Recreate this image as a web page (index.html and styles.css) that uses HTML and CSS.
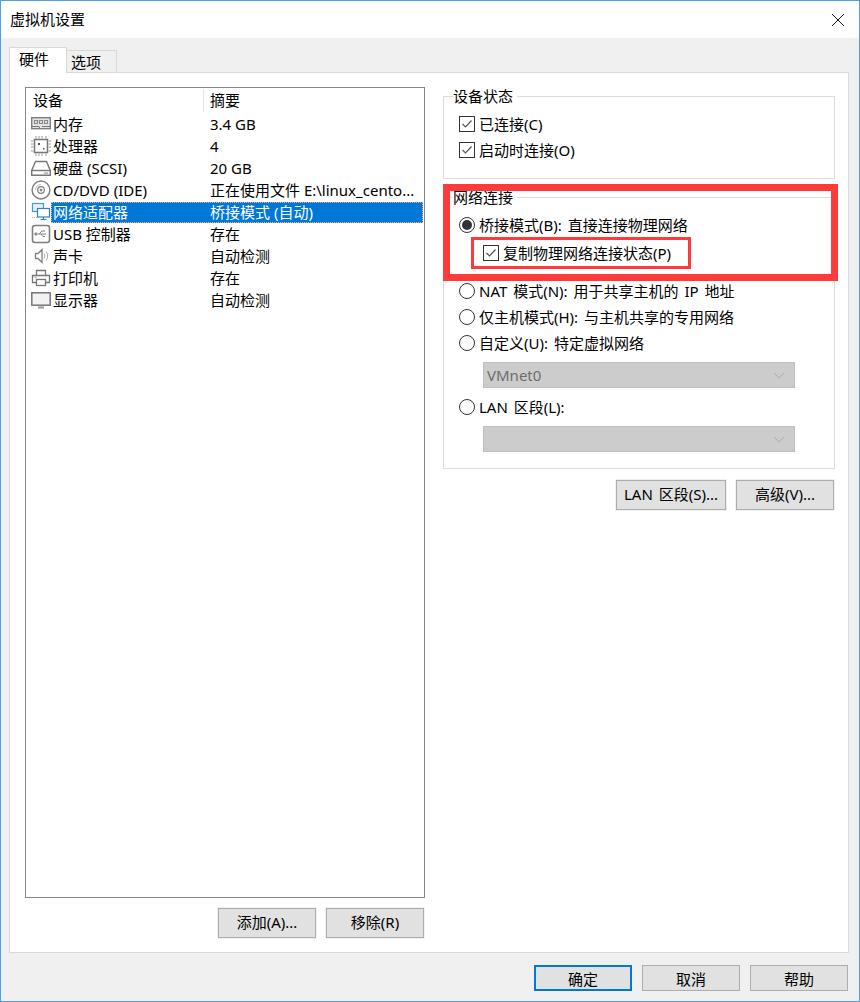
FILE: index.html
```html
<!DOCTYPE html>
<html lang="zh-CN">

<head>
    <meta charset="UTF-8">
    <title>虚拟机设置</title>
    <link rel="stylesheet" href="styles.css">
</head>

<body>
    <div class="window">
        <div class="titlebar">
            <span class="title">虚拟机设置</span>
            <svg class="close" width="12" height="12" viewBox="0 0 12 12"><path d="M0 0L12 12M12 0L0 12" stroke="#111" stroke-width="1" fill="none"/></svg>
        </div>
        <div class="body">
            <div class="tabs">
                <div class="tab active">硬件</div>
                <div class="tab">选项</div>
            </div>
            <div class="panel">
                <div class="left">
                    <div class="list">
                        <div class="list-head">
                            <div class="head-name">设备</div>
                            <div class="head-sum">摘要</div>
                        </div>
                        <div class="row">
                            <svg class="icon" viewBox="0 0 20 20" fill="none" stroke="#777" stroke-width="1.300"><rect x="0.700" y="3.700" width="18.600" height="11" fill="#e4e4e4"/><path d="M3.500 6.500h3v3h-3zM8.500 6.500h3v3h-3zM13.500 6.500h3v3h-3z" stroke="#888" stroke-width="1.100"/><path d="M1 12.500h7l1 2M19 12.500h-8" stroke-width="1"/></svg>
                            <div class="cell"><span class="name">内存</span><span class="sum">3.4 GB</span></div>
                        </div>
                        <div class="row">
                            <svg class="icon" viewBox="0 0 20 20" fill="none" stroke="#777"><rect x="3.500" y="3.500" width="13" height="13" stroke-width="1.500"/><path d="M5 0v2.500M8 0v2.500M11 0v2.500M15 0v2.500M5 17.500v2.500M8 17.500v2.500M11 17.500v2.500M15 17.500v2.500M0 5h2.500M0 8h2.500M0 11h2.500M0 15h2.500M17.500 5h2.500M17.500 8h2.500M17.500 11h2.500M17.500 15h2.500" stroke="#999"/><path d="M7 7h2v2h-2zM12 12h1.500v1.500h-1.500z" fill="#555" stroke="none"/></svg>
                            <div class="cell"><span class="name">处理器</span><span class="sum">4</span></div>
                        </div>
                        <div class="row">
                            <svg class="icon" viewBox="0 0 20 20" fill="none" stroke="#777" stroke-width="1.400"><path d="M4.500 3.500h11l3.800 9v4.800h-18.600v-4.800z"/><path d="M1 12.500h18"/><path d="M13 15h4" stroke="#aaa"/></svg>
                            <div class="cell"><span class="name">硬盘 (SCSI)</span><span class="sum">20 GB</span></div>
                        </div>
                        <div class="row">
                            <svg class="icon" viewBox="0 0 20 20" fill="none" stroke="#808080"><circle cx="10" cy="10" r="8.900" stroke-width="1.500"/><circle cx="10" cy="10" r="3.300" stroke-width="1.200"/><circle cx="10" cy="10" r="1" fill="#888"/><path d="M4.500 10a5.500 5.500 0 0 1 5.500-5.500" stroke="#bbb"/></svg>
                            <div class="cell"><span class="name">CD/DVD (IDE)</span><span class="sum">正在使用文件 E:\linux_cento...</span></div>
                        </div>
                        <div class="row selected">
                            <svg class="icon" viewBox="0 0 20 20" fill="none" stroke="#4a9ad8" stroke-width="1.200"><rect x="1.500" y="1.500" width="11" height="8" fill="#e4f1fb"/><rect x="6.500" y="6.500" width="12" height="8.500" fill="#fff" stroke="#2d84c8"/><path d="M12.500 15v2M9.500 17.500h6" stroke="#2d84c8"/><path d="M1 15.500h5" stroke="#aaa" stroke-dasharray="1 1"/></svg>
                            <div class="cell"><span class="name">网络适配器</span><span class="sum">桥接模式 (自动)</span></div>
                        </div>
                        <div class="row">
                            <svg class="icon" viewBox="0 0 20 20" fill="none" stroke="#808080"><rect x="1.500" y="1.500" width="17" height="17" rx="2.500" stroke-width="1.600"/><path d="M5 10h10M8 10l3-3h3M10 10l2 2.500h2"/><path d="M5 8.500v3l-1.500-1.500z" fill="#808080"/></svg>
                            <div class="cell"><span class="name">USB 控制器</span><span class="sum">存在</span></div>
                        </div>
                        <div class="row">
                            <svg class="icon" viewBox="0 0 20 20" fill="none" stroke="#808080"><path d="M4.500 7.500h2.500l4-4v13l-4-4h-2.500z" stroke-width="1.300"/><path d="M13 7.500a4 4 0 0 1 0 5M15 5.500a7 7 0 0 1 0 9" stroke="#aaa"/></svg>
                            <div class="cell"><span class="name">声卡</span><span class="sum">自动检测</span></div>
                        </div>
                        <div class="row">
                            <svg class="icon" viewBox="0 0 20 20" fill="none" stroke="#777" stroke-width="1.300"><path d="M5.500 7.500v-5h9v5"/><path d="M5 14.500h-3.500v-7h17v7h-3.500"/><rect x="5.500" y="11.500" width="9" height="6"/><path d="M3.500 9.500h2" stroke="#aaa"/></svg>
                            <div class="cell"><span class="name">打印机</span><span class="sum">存在</span></div>
                        </div>
                        <div class="row">
                            <svg class="icon" viewBox="0 0 20 20" fill="none" stroke="#777" stroke-width="1.500"><rect x="0.800" y="2.800" width="18.400" height="12.400" fill="#f2f2f2"/><path d="M7 17.500h6" stroke-width="2" stroke="#999"/></svg>
                            <div class="cell"><span class="name">显示器</span><span class="sum">自动检测</span></div>
                        </div>
                    </div>
                    <div class="left-btns">
                        <button class="btn">添加(A)...</button>
                        <button class="btn">移除(R)</button>
                    </div>
                </div>
                <div class="right">
                    <fieldset class="group status">
                        <legend>设备状态</legend>
                        <div class="opt"><span class="check"><svg width="14" height="14" viewBox="0 0 14 14"><path d="M2.500 7l3 3 6-6.500" fill="none" stroke="#555" stroke-width="1.200"/></svg></span><span class="label">已连接(C)</span></div>
                        <div class="opt"><span class="check"><svg width="14" height="14" viewBox="0 0 14 14"><path d="M2.500 7l3 3 6-6.500" fill="none" stroke="#555" stroke-width="1.200"/></svg></span><span class="label">启动时连接(O)</span></div>
                    </fieldset>
                    <fieldset class="group network">
                        <legend>网络连接</legend>
                        <div class="opt"><span class="radio on"></span><span class="label">桥接模式(B): 直接连接物理网络</span></div>
                        <div class="opt sub"><span class="check"><svg width="14" height="14" viewBox="0 0 14 14"><path d="M2.500 7l3 3 6-6.500" fill="none" stroke="#555" stroke-width="1.200"/></svg></span><span class="label">复制物理网络连接状态(P)</span></div>
                        <div class="opt after-sub"><span class="radio"></span><span class="label">NAT 模式(N): 用于共享主机的 IP 地址</span></div>
                        <div class="opt"><span class="radio"></span><span class="label">仅主机模式(H): 与主机共享的专用网络</span></div>
                        <div class="opt"><span class="radio"></span><span class="label">自定义(U): 特定虚拟网络</span></div>
                        <div class="select"><span>VMnet0</span><svg width="12" height="7" viewBox="0 0 12 7"><path d="M1 1l5 5 5-5" fill="none" stroke="#a8a8a8"/></svg></div>
                        <div class="opt after-select"><span class="radio"></span><span class="label">LAN 区段(L):</span></div>
                        <div class="select"><span></span><svg width="12" height="7" viewBox="0 0 12 7"><path d="M1 1l5 5 5-5" fill="none" stroke="#a8a8a8"/></svg></div>
                    </fieldset>
                    <div class="right-btns">
                        <button class="btn wide">LAN 区段(S)...</button>
                        <button class="btn">高级(V)...</button>
                    </div>
                    <div class="mark mark-big"></div>
                    <div class="mark mark-small"></div>
                </div>
            </div>
            <div class="footer">
                <button class="btn short default">确定</button>
                <button class="btn short">取消</button>
                <button class="btn short">帮助</button>
            </div>
        </div>
    </div>
</body>

</html>
```
FILE: styles.css
```css
* {
    box-sizing: border-box;
}

body {
    margin: 0;
    font-family: "Noto Sans", "Noto Sans CJK SC", sans-serif;
    font-size: 15px;
    color: #000;
}

.window {
    display: flex;
    flex-direction: column;
    width: 860px;
    height: 1002px;
    border: 1px solid #4f9fe8;
    background-color: #f0f0f0;
}

.titlebar {
    display: flex;
    justify-content: space-between;
    align-items: center;
    height: 37px;
    padding: 0 15px 0 9px;
    background-color: #fff;
    flex-shrink: 0;
}

.title {
    padding-bottom: 2px;
}

.body {
    display: flex;
    flex-direction: column;
    flex: 1;
    padding: 9px 10px 10px 8px;
}

.tabs {
    display: flex;
    align-items: flex-end;
    height: 25px;
}

.tab {
    width: 50px;
    height: 22px;
    padding-left: 4px;
    line-height: 22px;
    background-color: #f0f0f0;
    border: 1px solid #d9d9d9;
    border-bottom: 0;
    border-left: 0;
}

.tab.active {
    position: relative;
    z-index: 1;
    width: 58px;
    height: 26px;
    margin-bottom: -1px;
    padding-left: 9px;
    line-height: 23px;
    background-color: #fff;
    border-left: 1px solid #d9d9d9;
}

.panel {
    display: flex;
    flex: 1;
    gap: 18px;
    padding: 14px 13px 14px 15px;
    background-color: #fff;
    border: 1px solid #d9d9d9;
}

.left {
    display: flex;
    flex-direction: column;
    width: 400px;
}

.list {
    flex: 1;
    padding: 1px;
    border: 1px solid #828790;
}

.list-head {
    display: flex;
    height: 24px;
    line-height: 23px;
}

.head-name {
    width: 177px;
    height: 23px;
    padding-left: 6px;
    border-right: 1px solid #e5e5e5;
}

.head-sum {
    padding-left: 6px;
}

.row {
    display: flex;
    align-items: center;
    height: 22px;
    padding-left: 4px;
}

.icon {
    width: 20px;
    height: 20px;
    flex-shrink: 0;
}

.cell {
    display: flex;
    flex: 1;
    height: 21px;
    line-height: 19px;
    padding-left: 1px;
    border: 1px solid transparent;
    white-space: nowrap;
}

.name {
    width: 157px;
}

.selected .cell {
    color: #fff;
    background-color: #0078d7;
    border: 1px dotted #ffb066;
}

.left-btns {
    display: flex;
    justify-content: flex-end;
    gap: 10px;
    margin-top: 10px;
    padding-right: 1px;
}

.btn {
    width: 98px;
    height: 30px;
    padding: 0 0 3px;
    font-family: inherit;
    font-size: 15px;
    word-spacing: 2px;
    color: #000;
    background-color: #e1e1e1;
    border: 1px solid #adadad;
    box-shadow: 0 0 0 1px #f0f0f0;
    border-radius: 0;
}

.btn.wide {
    width: 110px;
}

.btn.short {
    height: 26px;
    padding-bottom: 0;
    box-shadow: none;
}

.btn.default {
    border: 2px solid #0078d7;
}

.right {
    position: relative;
    display: flex;
    flex-direction: column;
    flex: 1;
}

.group {
    margin: 0;
    padding: 6px 0 15px 15px;
    border: 1px solid #dcdcdc;
}

.group legend {
    height: 18px;
    margin-left: -6px;
    padding: 0 4px 0 0;
    line-height: 18px;
}

.network {
    margin-top: 9px;
    padding-bottom: 16px;
}

.opt {
    display: flex;
    align-items: center;
    height: 26px;
    white-space: nowrap;
    word-spacing: 2px;
}

.label {
    padding-bottom: 2px;
}

.opt.sub {
    margin-top: 2px;
    padding-left: 24px;
}

.opt.after-sub {
    margin-top: 12px;
}

.opt.after-select {
    margin-top: 6px;
}

.check,
.radio {
    display: flex;
    align-items: center;
    justify-content: center;
    width: 16px;
    height: 16px;
    margin-right: 4px;
    flex-shrink: 0;
    border: 1px solid #333;
}

.radio {
    border-radius: 50%;
}

.radio.on::after {
    content: "";
    width: 10px;
    height: 10px;
    border-radius: 50%;
    background-color: #333;
}

.select {
    display: flex;
    align-items: center;
    justify-content: space-between;
    width: 312px;
    height: 26px;
    margin-top: 6px;
    margin-left: 24px;
    padding: 0 9px 0 3px;
    color: #6d6d6d;
    background-color: #ccc;
    border: 1px solid #bfbfbf;
}

.right-btns {
    display: flex;
    justify-content: flex-end;
    gap: 10px;
    margin-top: 11px;
    padding-right: 1px;
}

/* red annotations drawn over the screenshot */
.mark {
    position: absolute;
    border-style: solid;
    border-color: #fe3a3a;
    pointer-events: none;
}

.mark-big {
    left: 0;
    top: 97px;
    width: 395px;
    height: 97px;
    border-width: 7px;
}

.mark-small {
    left: 28px;
    top: 150px;
    width: 220px;
    height: 32px;
    border-width: 3px;
}

.footer {
    display: flex;
    justify-content: flex-end;
    gap: 10px;
    margin-top: 12px;
    padding-right: 1px;
}
```
